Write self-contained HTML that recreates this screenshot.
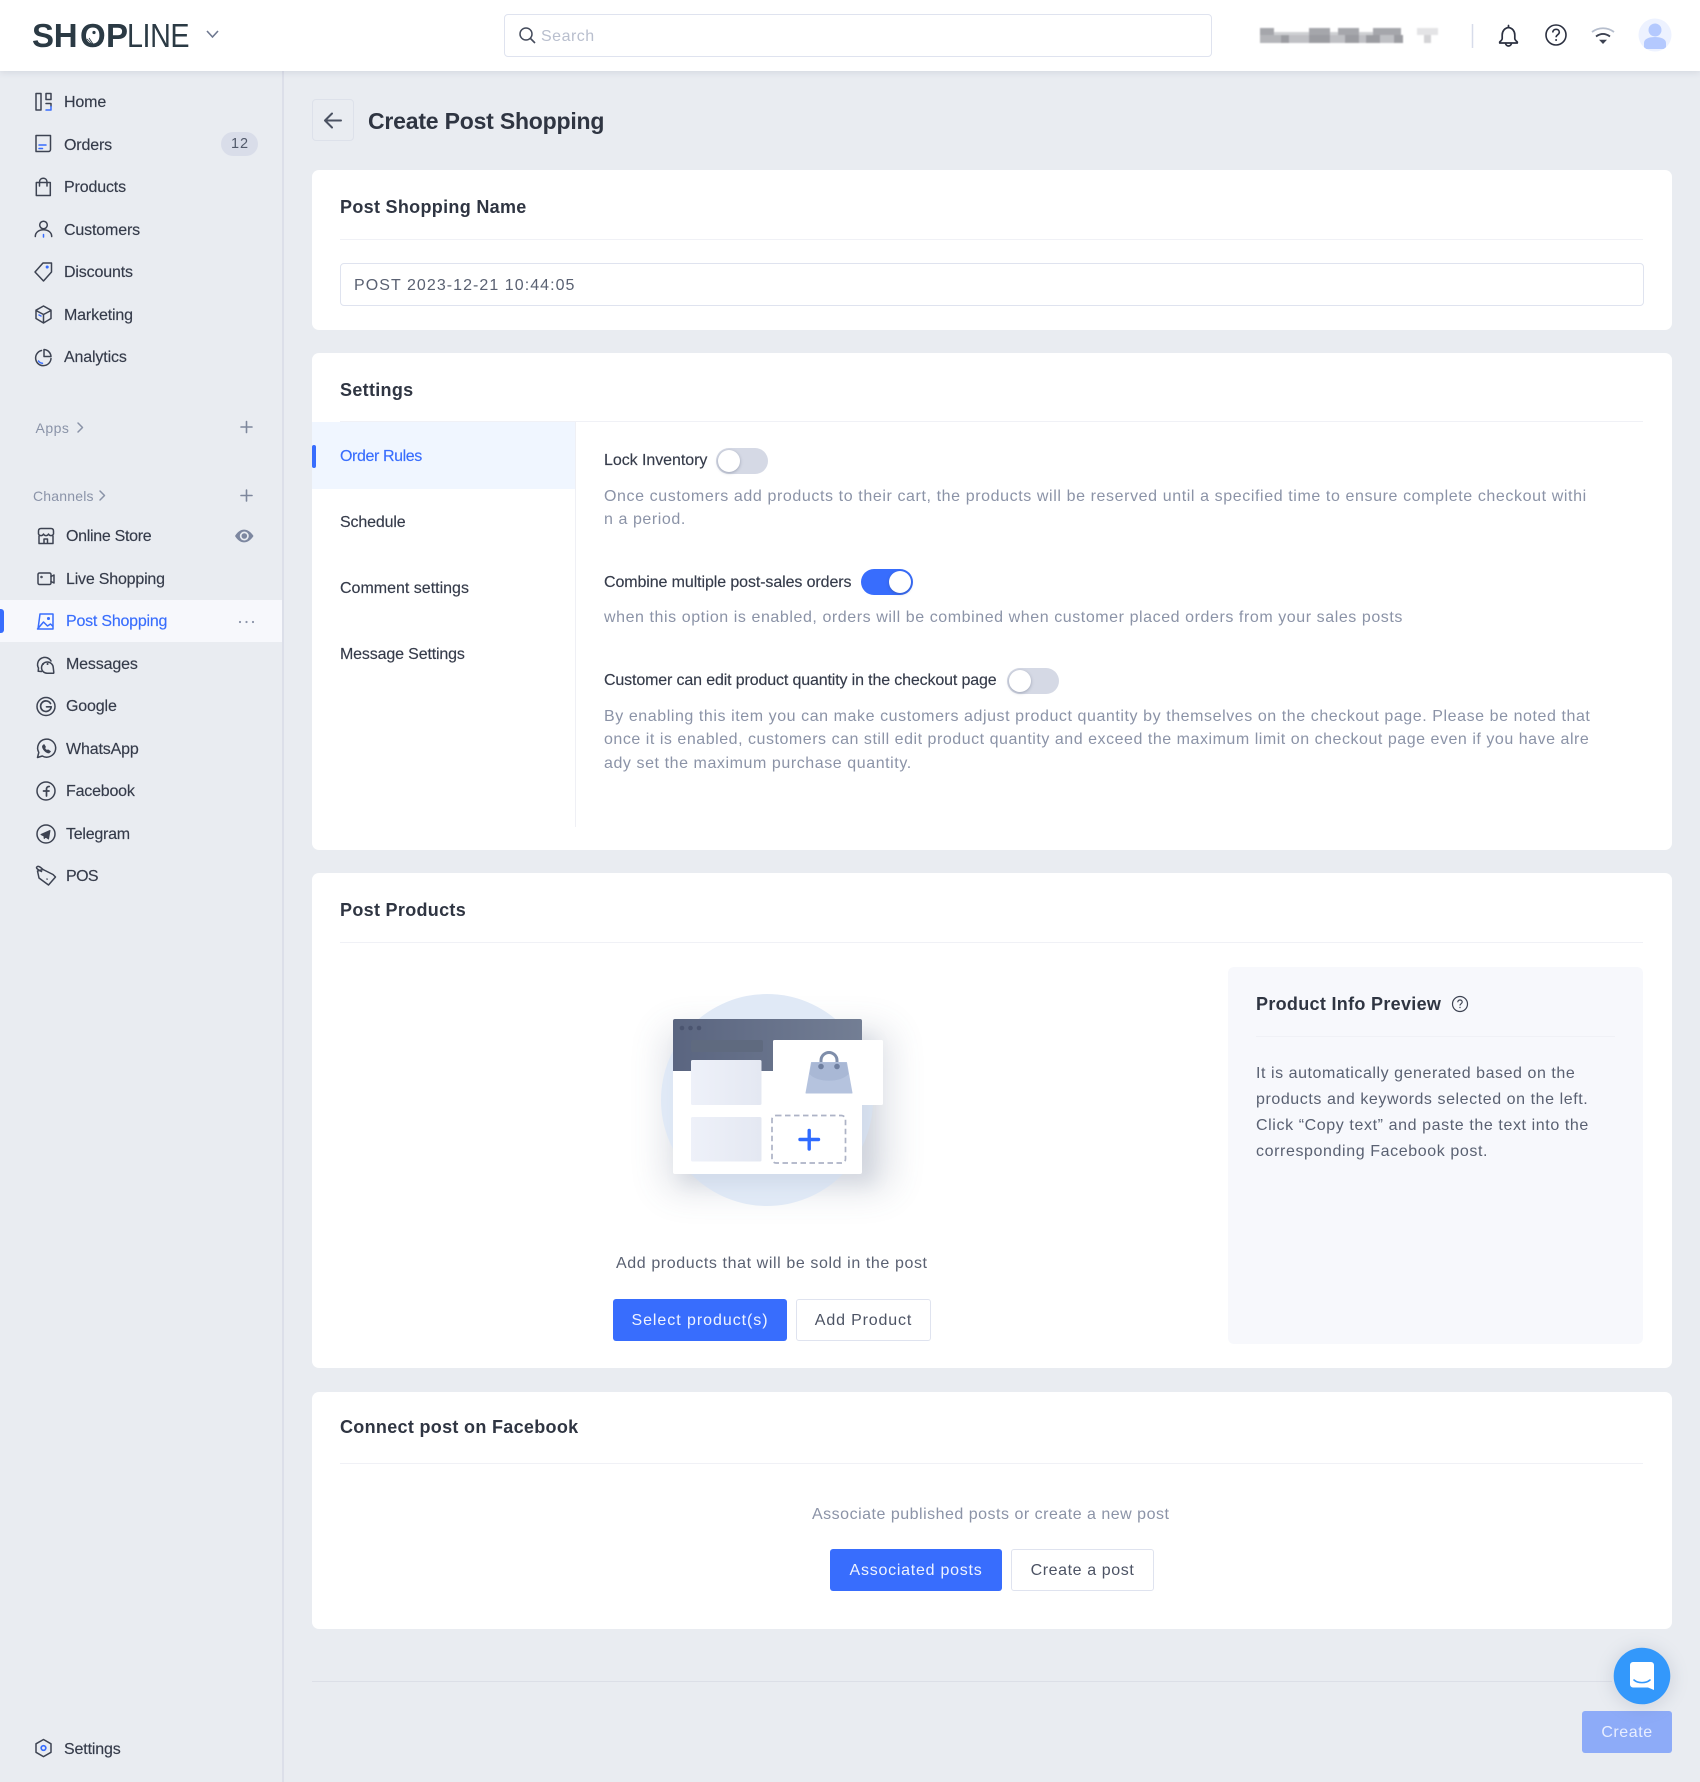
<!DOCTYPE html>
<html lang="en"><head><meta charset="utf-8"><title>Create Post Shopping</title>
<style>
*{box-sizing:border-box;margin:0;padding:0}
html,body{width:1700px;height:1782px;overflow:hidden;background:#e9ecf1}
body{position:relative;font-family:"Liberation Sans",Arial,sans-serif;color:#343a48;font-size:16px}
.a{position:absolute}
.t{position:absolute;line-height:0;white-space:nowrap;margin-top:1.2px}
.h{position:absolute;line-height:0;white-space:nowrap;font-weight:700;font-size:18px;color:#2f3542;letter-spacing:.31px;margin-top:-.2px}
.n{position:absolute;line-height:0;white-space:nowrap;font-size:16px;color:#353b4a;letter-spacing:-.15px;margin-top:1.3px;-webkit-text-stroke:.15px #353b4a}
.d{position:absolute;line-height:0;white-space:nowrap;font-size:16px;color:#8b93a7;letter-spacing:.57px;margin-top:1.2px}
.card{position:absolute;left:312px;width:1360px;background:#fff;border-radius:7px}
.hr{position:absolute;height:1px;background:#f0f1f6}
.btn{position:absolute;height:42px;border-radius:3px;display:flex;align-items:center;justify-content:center;font-size:16px;padding-top:1.5px}
.p{background:#386dfd;color:#eef3ff}
.s{background:#fff;border:1.5px solid #dfe3ef;color:#4c5364}
.tg{position:absolute;width:52px;height:26px;border-radius:13px;background:#d5d9e5}
.tg i{position:absolute;top:2px;left:2px;width:22px;height:22px;border-radius:50%;background:#fff;box-shadow:0 1px 3px rgba(50,60,90,.35)}
.tg.on{background:#386dfd}.tg.on i{left:28px}
svg{position:absolute;left:0;top:0}
</style></head><body>

<div class="a" style="left:282px;top:71px;width:1.5px;height:1711px;background:#dcdfe9"></div>
<div class="a" style="left:0;top:600px;width:282px;height:42px;background:#f7f8fc"></div>
<div class="a" style="left:0;top:609px;width:3.5px;height:24px;background:#386dfd;border-radius:0 3px 3px 0"></div>

<div class="a" style="left:0;top:0;width:1700px;height:71px;background:#fff;box-shadow:0 1px 7px rgba(40,50,80,.12)"></div>
<div class="t" style="left:32px;top:35px;font-size:33px;font-weight:700;color:#2b3a44;letter-spacing:-.3px">SH</div>
<div class="t" style="left:80px;top:35px;font-size:33px;font-weight:700;color:#2b3a44">O</div>
<div class="t" style="left:106px;top:35px;font-size:33px;font-weight:700;color:#2b3a44">P</div>
<div class="t" style="left:127px;top:35px;font-size:33px;color:#2b3a44;letter-spacing:-.5px;transform:scaleX(.87);transform-origin:0 0">LINE</div>
<div class="a" style="left:504px;top:14px;width:708px;height:43px;border:1.5px solid #dfe3ef;border-radius:4px;background:#fff"></div>
<div class="t" style="left:541px;top:35.500px;color:#b9bfce;font-size:16px;letter-spacing:.5px">Search</div>

<div class="n" style="left:64px;top:102px">Home</div>
<div class="n" style="left:64px;top:145px">Orders</div>
<div class="a" style="left:221px;top:132px;width:37px;height:24px;border-radius:12px;background:#d9dde9;color:#525a6b;font-size:14.5px;line-height:24px;text-align:center;letter-spacing:.9px;padding-left:1px">12</div>
<div class="n" style="left:64px;top:187px">Products</div>
<div class="n" style="left:64px;top:229.500px">Customers</div>
<div class="n" style="left:64px;top:272px">Discounts</div>
<div class="n" style="left:64px;top:314.500px">Marketing</div>
<div class="n" style="left:64px;top:357px">Analytics</div>
<div class="t" style="left:35.500px;top:427px;font-size:14px;color:#8a93a8;letter-spacing:.5px">Apps</div>
<div class="t" style="left:33px;top:495px;font-size:14px;color:#8a93a8;letter-spacing:.2px">Channels</div>
<div class="n" style="left:66px;top:536px;letter-spacing:-.3px">Online Store</div>
<div class="n" style="left:66px;top:579px;letter-spacing:-.2px">Live Shopping</div>
<div class="n" style="left:66px;top:621px;color:#386dfd;letter-spacing:-.22px;-webkit-text-stroke:.15px #386dfd">Post Shopping</div>
<div class="n" style="left:66px;top:664px">Messages</div>
<div class="n" style="left:66px;top:706px">Google</div>
<div class="n" style="left:66px;top:749px">WhatsApp</div>
<div class="n" style="left:66px;top:791px;letter-spacing:-.2px">Facebook</div>
<div class="n" style="left:66px;top:834px;letter-spacing:-.25px">Telegram</div>
<div class="n" style="left:66px;top:876px;letter-spacing:-.6px">POS</div>
<div class="n" style="left:64px;top:1749px">Settings</div>

<div class="a" style="left:312px;top:99px;width:42px;height:42px;border:1.5px solid #dde1ea;border-radius:4px"></div>
<div class="t" style="left:368px;top:120px;font-size:23px;font-weight:700;color:#2f3542;letter-spacing:-.2px">Create Post Shopping</div>

<div class="card" style="top:170px;height:160px"></div>
<div class="h" style="left:340px;top:207px">Post Shopping Name</div>
<div class="hr" style="left:340px;top:239px;width:1303px"></div>
<div class="a" style="left:340px;top:263px;width:1304px;height:43px;border:1.5px solid #dfe3ef;border-radius:4px"></div>
<div class="t" style="left:354px;top:285px;color:#5a6172;letter-spacing:1.05px">POST 2023-12-21 10:44:05</div>

<div class="card" style="top:353px;height:497px"></div>
<div class="h" style="left:340px;top:390px">Settings</div>
<div class="hr" style="left:340px;top:421px;width:1303px"></div>
<div class="a" style="left:312px;top:422px;width:264px;height:67px;background:#f0f6ff"></div>
<div class="a" style="left:312px;top:445px;width:3.5px;height:23px;background:#386dfd;border-radius:2px"></div>
<div class="a" style="left:575px;top:422px;width:1px;height:405px;background:#eff0f5"></div>
<div class="n" style="left:340px;top:456px;color:#386dfd;letter-spacing:-.4px;-webkit-text-stroke:.15px #386dfd">Order Rules</div>
<div class="n" style="left:340px;top:522px">Schedule</div>
<div class="n" style="left:340px;top:588px;letter-spacing:0">Comment settings</div>
<div class="n" style="left:340px;top:654px">Message Settings</div>

<div class="n" style="left:604px;top:460px;letter-spacing:-.05px">Lock Inventory</div>
<div class="tg" style="left:716px;top:448px"><i></i></div>
<div class="d" style="left:604px;top:496px;letter-spacing:.6px">Once customers add products to their cart, the products will be reserved until a specified time to ensure complete checkout withi</div>
<div class="d" style="left:604px;top:519px">n a period.</div>
<div class="n" style="left:604px;top:582px;letter-spacing:-.1px">Combine multiple post-sales orders</div>
<div class="tg on" style="left:861px;top:569px"><i></i></div>
<div class="d" style="left:604px;top:617px">when this option is enabled, orders will be combined when customer placed orders from your sales posts</div>
<div class="n" style="left:604px;top:680px;letter-spacing:-.14px">Customer can edit product quantity in the checkout page</div>
<div class="tg" style="left:1007px;top:668px"><i></i></div>
<div class="d" style="left:604px;top:716px">By enabling this item you can make customers adjust product quantity by themselves on the checkout page. Please be noted that</div>
<div class="d" style="left:604px;top:739px;letter-spacing:.53px">once it is enabled, customers can still edit product quantity and exceed the maximum limit on checkout page even if you have alre</div>
<div class="d" style="left:604px;top:763px">ady set the maximum purchase quantity.</div>

<div class="card" style="top:873px;height:495px"></div>
<div class="h" style="left:340px;top:910px">Post Products</div>
<div class="hr" style="left:340px;top:942px;width:1303px"></div>
<div class="a" style="left:1228px;top:967px;width:415px;height:377px;background:#f7f8fc;border-radius:6px"></div>
<div class="h" style="left:1256px;top:1004px">Product Info Preview</div>
<div class="hr" style="left:1256px;top:1036px;width:359px"></div>
<div class="t" style="left:1256px;top:1073px;color:#5a6172;letter-spacing:.55px">It is automatically generated based on the</div>
<div class="t" style="left:1256px;top:1099px;color:#5a6172;letter-spacing:.57px">products and keywords selected on the left.</div>
<div class="t" style="left:1256px;top:1125px;color:#5a6172;letter-spacing:.6px">Click “Copy text” and paste the text into the</div>
<div class="t" style="left:1256px;top:1151px;color:#5a6172;letter-spacing:.6px">corresponding Facebook post.</div>
<div class="t" style="left:616px;top:1262.500px;color:#5a6172;letter-spacing:.6px">Add products that will be sold in the post</div>
<div class="btn p" style="left:613px;top:1299px;width:174px;letter-spacing:.95px">Select product(s)</div>
<div class="btn s" style="left:796px;top:1299px;width:135px;letter-spacing:.85px">Add Product</div>

<div class="card" style="top:1392px;height:237px"></div>
<div class="h" style="left:340px;top:1427px">Connect post on Facebook</div>
<div class="hr" style="left:340px;top:1463px;width:1303px"></div>
<div class="t" style="left:812px;top:1514px;color:#8b93a7;letter-spacing:.5px">Associate published posts or create a new post</div>
<div class="btn p" style="left:830px;top:1549px;width:172px;letter-spacing:.75px">Associated posts</div>
<div class="btn s" style="left:1011px;top:1549px;width:143px;letter-spacing:.6px">Create a post</div>

<div class="a" style="left:312px;top:1681px;width:1300px;height:1px;background:#dcdfe7"></div>
<div class="btn" style="left:1582px;top:1711px;width:90px;background:#8dabf8;color:#e8eeff;letter-spacing:.55px">Create</div>

<svg width="1700" height="1782" viewBox="0 0 1700 1782" fill="none">
<defs>
<linearGradient id="hd" x1="0" x2="1"><stop offset="0" stop-color="#5a6580"/><stop offset="1" stop-color="#737e94"/></linearGradient>
<linearGradient id="tile" x1="0" x2="1"><stop offset="0" stop-color="#eef1f9"/><stop offset="1" stop-color="#e4e8f2"/></linearGradient>
<filter id="bl" x="-5%" y="-20%" width="110%" height="140%"><feGaussianBlur stdDeviation=".7"/></filter>
<filter id="big" x="-30%" y="-30%" width="160%" height="160%"><feGaussianBlur stdDeviation="18"/></filter>
<filter id="cs" x="-30%" y="-30%" width="160%" height="160%"><feGaussianBlur stdDeviation="8"/></filter>
<clipPath id="av"><circle cx="1655" cy="35" r="16.5"/></clipPath>
</defs>

<!-- logo O detail -->
<ellipse cx="92.500" cy="36" rx="6.500" ry="7.500" fill="#fff"/><circle cx="94" cy="32.500" r="1.600" fill="#2b3a44"/><path d="M87 39l5 5M89 38l4 6" stroke="#2b3a44" stroke-width=".8"/>
<path d="M207 31l5.500 6 5.500-6" stroke="#6e7890" stroke-width="1.600"/>
<!-- search -->
<circle cx="526" cy="34" r="6" stroke="#454c5c" stroke-width="1.500"/><path d="M530.500 38.500l4.500 4.500" stroke="#454c5c" stroke-width="1.600"/>

<!-- blurred account -->
<g filter="url(#bl)">
<path d="M1260 28h14v7h-14zM1309 28h21v7h-21zM1338 28h21v7h-21zM1373 28h28v7h-28z" fill="#a5a6ab"/>
<path d="M1274 32h35v3h-35zM1330 32h8v3h-8zM1359 32h14v3h-14z" fill="#cfd0d3"/>
<path d="M1260 35h14v8h-14zM1274 35h7v8h-7zM1295 35h7v8h-7z" fill="#b4b5b9"/>
<path d="M1281 35h8v8h-8zM1309 35h21v8h-21zM1345 35h14v8h-14zM1366 35h14v8h-14zM1394 35h9v8h-9z" fill="#9b9ca1"/>
<path d="M1289 35h20v8h-20zM1330 35h15v8h-15zM1359 35h7v8h-7zM1380 35h14v8h-14z" fill="#bfc0c4"/>
<path d="M1417 28h21v7h-21z" fill="#e4e4e6"/><path d="M1424 35h7v8h-7z" fill="#d3d3d6"/>
</g>
<path d="M1472.500 24v24" stroke="#d7dcea" stroke-width="1.500"/>
<!-- bell -->
<path d="M1508.500 25.500v2c-4 .6-6.300 3.800-6.300 7.500v3.500c0 1.500-1.500 2.500-2.500 3.500v1h17.600v-1c-1-1-2.500-2-2.500-3.500V35c0-3.700-2.300-6.900-6.300-7.500z" stroke="#2b3040" stroke-width="1.700" stroke-linejoin="round"/><path d="M1505.500 43.500c.6 1.800 1.600 2.500 3 2.500s2.400-.7 3-2.500" stroke="#2b3040" stroke-width="1.700"/>
<!-- help -->
<circle cx="1556" cy="35" r="10" stroke="#2b3040" stroke-width="1.600"/><path d="M1552.800 32.500c0-2 1.500-3.200 3.300-3.200s3.200 1.200 3.200 2.900c0 2.500-3.200 2.500-3.200 5" stroke="#2b3040" stroke-width="1.600"/><circle cx="1556.100" cy="40" r="1" fill="#2b3040"/>
<!-- wifi -->
<path d="M1592 32c6.500-5 15.500-5 22 0" stroke="#b6becd" stroke-width="1.800"/><path d="M1596 36.500c4.500-3.300 9.500-3.300 14 0" stroke="#3c4252" stroke-width="1.800"/><path d="M1599 39.800h8l-4 4.200z" fill="#3c4252"/>
<!-- avatar -->
<circle cx="1655" cy="35" r="16.500" fill="#edf2ff"/><g clip-path="url(#av)"><circle cx="1655" cy="30" r="6.500" fill="#b4c9fe"/><path d="M1644 49v-6c0-4 5-6 11-6s11 2 11 6v6z" fill="#b4c9fe"/></g>

<!-- sidebar icons -->
<g stroke="#3d4352" stroke-width="1.500" stroke-linejoin="round" stroke-linecap="round" transform="translate(-.5 0)">
<path d="M36.500 93.500h5v16.500h-5zM46.500 93.500h5v6h-5zM46.500 103.500h5v3"/><path d="M51.500 106.500v3.500h-5" stroke="#386dfd"/>
<path d="M36.500 135.500h14.500v14a2 2 0 0 1-2 2h-12.500z"/><path d="M39.500 145h7M39.500 148.500h3.500" stroke="#386dfd"/>
<path d="M36.800 182.500h14v13h-14zM40 186v-4c0-5 7.500-5 7.500 0v4"/>
<circle cx="44" cy="225" r="3.800"/><path d="M35.800 236.500c0-9 16.400-9 16.400 0"/><path d="M44 234.500v2.500" stroke="#386dfd"/>
<path d="M35.500 272l8-9h8.500v9l-8 9z"/><circle cx="47.700" cy="267" r=".8" stroke="#386dfd"/>
<path d="M44 306l7.500 4.200v8.300l-7.500 4.500-7.500-4.500v-8.300zM36.500 310.500l7.500 4 7.500-4M44 314.500v8"/><path d="M39.500 315l2 1" stroke="#386dfd"/>
<path d="M42 350.500a7.700 7.700 0 1 0 9.500 8"/><path d="M44.500 349.500a7.500 7.500 0 0 1 7 7h-7z"/><path d="M39 361c1 1.500 2.500 2.200 4 2.200" stroke="#386dfd"/>
</g>
<g stroke="#8a93a8" stroke-width="1.500" stroke-linecap="round" stroke-linejoin="round">
<path d="M78 423l4.500 4.500-4.500 4.500M100 491l4.500 4.500-4.500 4.500"/>
</g>
<g stroke="#7e879c" stroke-width="1.600" stroke-linecap="round"><path d="M246.500 421.500v11M241 427h11M246.500 490v11M241 495.500h11"/></g>
<path d="M235 536c5-8.500 13-8.500 18.500 0-5.500 8.500-13.500 8.500-18.500 0z" fill="#7d87a0"/><circle cx="244.300" cy="536" r="4.500" fill="#e9ecf1"/><circle cx="244.300" cy="536" r="2.800" fill="#7d87a0"/>
<g fill="#8a93a8"><circle cx="240" cy="622" r="1.100"/><circle cx="246.500" cy="622" r="1.100"/><circle cx="253" cy="622" r="1.100"/></g>

<g stroke="#3d4352" stroke-width="1.500" stroke-linejoin="round" stroke-linecap="round">
<path d="M41 528.500h10c1.600 0 2.500 1 2.500 2.500v3c-1 2.200-4 2.200-5 0-1 2.200-4 2.200-5 0-1 2.200-4 2.200-5 0v-3c0-1.500.9-2.500 2.500-2.500zM39 536v7.500h14V536M44 543v-4h3.500v4"/>
<rect x="38" y="573" width="13" height="11.500" rx="1.500"/><path d="M51 576.500l3-1.500v8l-3-1.500"/><circle cx="41.500" cy="577" r=".5"/>
</g>
<g stroke="#386dfd" stroke-width="1.500" stroke-linejoin="round" stroke-linecap="round">
<path d="M40 614h13v15h-15zM37.500 629l6-7 4 4 3-2 2.500 2.500"/><circle cx="48.500" cy="618.500" r=".8"/>
</g>
<g stroke="#3d4352" stroke-width="1.500" stroke-linejoin="round" stroke-linecap="round">
<path d="M41.500 671.500c-2.300-.2-3.300-.2-3.300-.2l.3-3.300a7 7 0 0 1 3.500-10 7 7 0 0 1 9 3"/><path d="M41.500 668a5.800 5.800 0 0 1 5.800-6 6 6 0 0 1 6 6l.5 4.500-.2.800h-6.600a5.700 5.700 0 0 1-5.500-5.300z"/><path d="M43 664h.1M47.500 664h.1" stroke-width="2"/>
<circle cx="46" cy="706.500" r="9"/><path d="M50.500 703.500a5.300 5.300 0 1 0 .7 3.300h-4.700" stroke-width="1.700"/>
<path d="M37.500 757.500l1.300-5a9 9 0 1 1 3.500 3.500z"/><path d="M42.500 746c-.5 2.800 3.500 7 6.500 7l1.500-1.500-2.500-1.700-1 .7c-1-.5-2-1.500-2.300-2.500l.8-1-1.500-2.500z" fill="#3d4352" stroke-width=".8"/>
<circle cx="46" cy="791" r="9"/><path d="M46.500 796v-6.500c0-2 .6-3 2.700-3M43.500 791h5.500" stroke-width="1.700"/>
<circle cx="46" cy="834" r="9"/><path d="M41 834.500l9-4-1.500 8.500-3-2-1.300 1.500-.2-2.500z" fill="#3d4352" stroke-width="1"/>
<path d="M43 869.500l10 5 2.500 2.500-7 8-9.500-7-1.500-7z"/><path d="M41.500 871.500c-4-2-6-3.500-4.500-4.700 1.500-1.300 3.800.7 6 2.700"/><path d="M47 879l.1.100"/>
<path d="M43.500 1739.500l7.500 4.300v8.500l-7.500 4.300-7.500-4.300v-8.500z"/>
</g>
<circle cx="43.500" cy="1748" r="2.300" stroke="#386dfd" stroke-width="1.700"/>

<!-- back -->
<path d="M325 120.500h16M332 113.500l-7 7 7 7" stroke="#4b5262" stroke-width="2" stroke-linecap="round" stroke-linejoin="round"/>

<!-- illustration -->
<rect x="665" y="1030" width="225" height="160" rx="8" fill="#4f5d7c" opacity=".18" filter="url(#big)"/>
<circle cx="767" cy="1100" r="106" fill="#e0e9f6"/>
<rect x="680" y="1035" width="195" height="150" rx="6" fill="#5a6a8c" opacity=".1" filter="url(#cs)"/>
<rect x="673" y="1019" width="189" height="155" rx="2" fill="#fff"/>
<path d="M673 1021a2 2 0 0 1 2-2h185a2 2 0 0 1 2 2v50h-189z" fill="url(#hd)"/>
<g fill="#4b5570"><circle cx="682" cy="1028" r="2.300"/><circle cx="690.500" cy="1028" r="2.300"/><circle cx="699" cy="1028" r="2.300"/></g>
<rect x="691" y="1040" width="72" height="12" rx="2" fill="#5f6a7f"/>
<rect x="691" y="1060" width="70.500" height="45" rx="1.500" fill="url(#tile)"/>
<rect x="691" y="1117" width="70.500" height="44.500" rx="1.500" fill="url(#tile)"/>
<rect x="773" y="1040" width="110" height="65" rx="1.500" fill="#fff"/>
<path d="M821 1067v-6.500a8 8 0 0 1 16 0v6.500" stroke="#7f8eaa" stroke-width="3"/>
<path d="M811.500 1062.500h35l5.500 30.500h-46z" fill="#b5c3de" stroke="#b5c3de" stroke-linejoin="round"/>
<path d="M809.500 1074c8 9 31 9 39 0l-2-11.500h-35z" fill="#a9b8d5"/>
<circle cx="821" cy="1066.500" r="2.800" fill="#6f7f9f"/><circle cx="837" cy="1066.500" r="2.800" fill="#6f7f9f"/>
<rect x="772" y="1115.500" width="73.500" height="47.500" rx="4" stroke="#adb3c6" stroke-width="1.700" stroke-dasharray="5.500 3.500"/>
<path d="M800 1139.500h18.500M809.200 1130.500v18.500" stroke="#2f6bff" stroke-width="3.400" stroke-linecap="round"/>

<!-- info icon -->
<circle cx="1460" cy="1004" r="7.500" stroke="#3d4352" stroke-width="1.200"/><path d="M1457.800 1002.200c0-1.400 1-2.200 2.200-2.200s2.200.8 2.200 2c0 1.700-2.200 1.700-2.200 3.500" stroke="#3d4352" stroke-width="1.200"/><circle cx="1460" cy="1007.500" r=".7" fill="#3d4352"/>

<!-- chat -->
<circle cx="1642" cy="1678" r="32" fill="#5a6680" opacity=".14" filter="url(#cs)"/>
<circle cx="1642" cy="1676" r="28.300" fill="#3398fb"/>
<path d="M1633 1662h18a3 3 0 0 1 3 3v25l-6-2.500h-15a3 3 0 0 1-3-3v-19.500a3 3 0 0 1 3-3z" fill="#fff"/>
<path d="M1634 1680c4 3.500 12 3.500 16 0" stroke="#3398fb" stroke-width="1.600" stroke-linecap="round"/>
</svg>
</body></html>
